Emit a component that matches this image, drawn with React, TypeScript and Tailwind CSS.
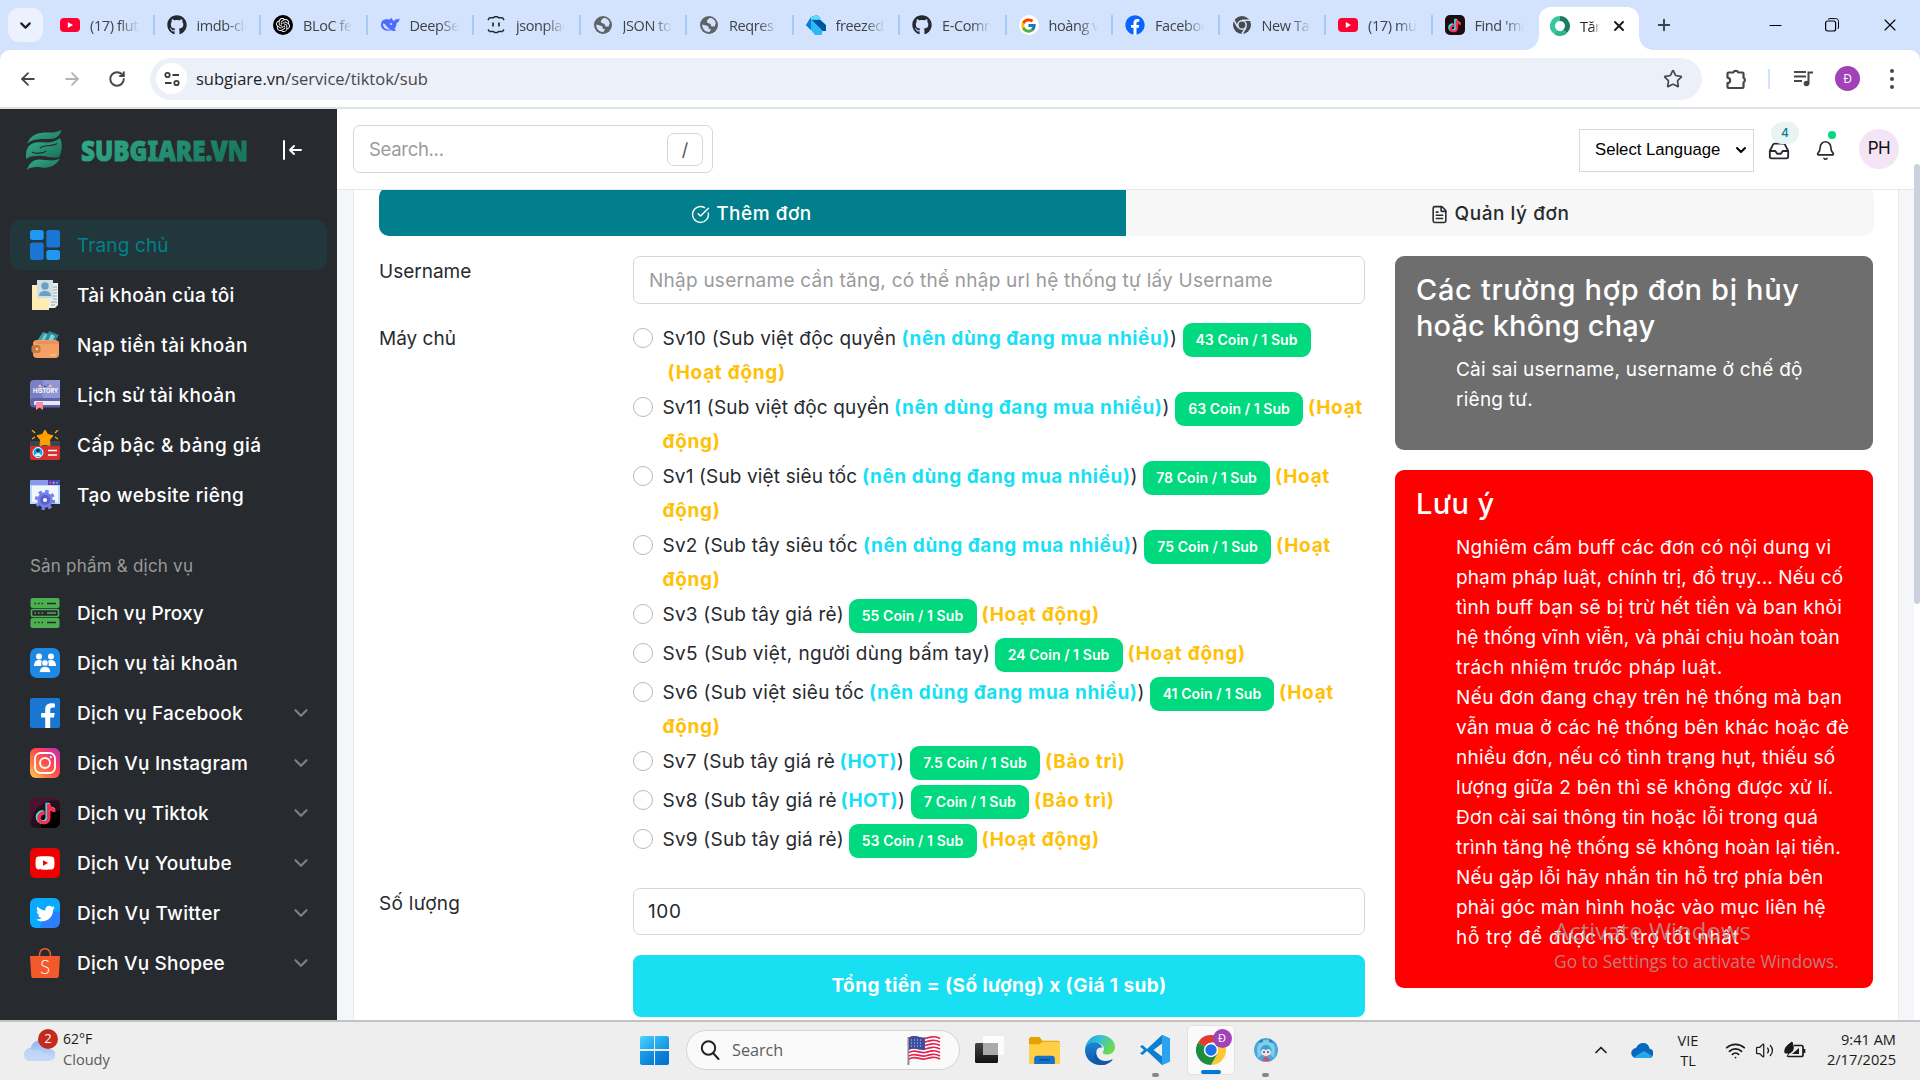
import React from "react";
import type { ReactNode } from "react";
import { FaGithub, FaYoutube, FaFacebook, FaTiktok, FaTwitter, FaFacebookF } from "react-icons/fa";
import { FcGoogle } from "react-icons/fc";
import { SiOpenai } from "react-icons/si";
import { ArrowLeft, ArrowRight, ChevronDown, ChevronUp, RotateCw, Star, X, Plus, Minus, FileText, Bell, Inbox, Wifi, Volume2, CircleCheckBig } from "lucide-react";

/* ---------- Browser tab icons ---------- */

function GlobeIcon() {
  return (
    <svg viewBox="0 0 20 20" className="size-5">
      <circle cx="10" cy="10" r="9" fill="#5f6368" />
      <path d="M10.500 3 8 5.500v2l3.500 1.500 1 2.500h3l1.200-3C16.500 5 13.500 3 10.500 3Z" fill="#d3e3fd" />
      <path d="M3.200 9.500 7 10.500l2.500 1v2l2.500.8-1.500 2.700C6 17 3 13.500 3.200 9.500Z" fill="#d3e3fd" />
    </svg>
  );
}

function DeepSeekIcon() {
  return (
    <svg viewBox="0 0 20 20" className="size-5">
      <path d="M1 8.500C1.500 5 5 3.600 9 4.500c1 .4 1.700-.8 2-2 1.200 1 1.300 2.700 2.600 3.300 2 .4 1.700-2.300 3-1.800 1.200.6 2-.4 3-.6-.1 2.400-1.200 4-3 4.600-.2 3-1 4.600-2.300 6l2 1.600c-2 .8-3.700.3-5.300-.4C5 16.800.4 14 1 8.500Z" fill="#4d6bfe" />
      <path d="M3 8.500c3 0 3.600 4.600 7.600 5.700C7 15.500 2.800 13 3 8.500Z" fill="#d3e3fd" />
      <circle cx="11" cy="9" r="1.100" fill="#d3e3fd" />
    </svg>
  );
}

function JsonIcon() {
  return (
    <svg viewBox="0 0 20 20" className="size-5" fill="none" stroke="#24292f" strokeWidth="1.400">
      <path d="M3.500 2.700h4l1-1h3l1 1h4M3.500 16.500h4l1 1h3l1-1h4" />
      <path d="M3.500 2.700 2 5M16.500 2.700 18 5M3.500 16.500 2 14.500M16.500 16.500 18 14.500" />
      <path d="M7 7.500v4M13 7.500v4" strokeWidth="1.700" />
    </svg>
  );
}

function DartIcon() {
  return (
    <svg viewBox="0 0 20 20" className="size-5">
      <path d="m0 10 5-8 6-2 3 2.500L5 4.500v10.500Z" fill="#0075c9" />
      <path d="M5 4.500h9L20 10v6h-3.500Z" fill="#00569e" />
      <path d="M5 4.500 16.500 16l-1 4H9l-4-5Z" fill="#2cb7f6" />
      <path d="m5 2 6-2 4 3-1 1.500H5Z" fill="#55ddff" />
      <path d="m0 10 5-5.500V15Z" fill="#0d7fd0" />
    </svg>
  );
}

function ChromeGray() {
  return (
    <svg viewBox="0 0 20 20" className="size-5">
      <circle cx="10" cy="10" r="9" fill="#474b50" />
      <circle cx="10" cy="10" r="4.200" fill="none" stroke="#d3e3fd" strokeWidth="1.600" />
      <path d="M10 5.300h8.300M5.900 12.300 1.800 5.200M14 12.300 9.900 19" stroke="#d3e3fd" strokeWidth="1.600" />
    </svg>
  );
}

function TiktokNote({ className }: { className: string }) {
  return (
    <span className={`grid place-items-center ${className}`}>
      <FaTiktok className="col-start-1 row-start-1 size-full -translate-x-[0.6px] -translate-y-[0.4px] text-[#25f4ee]" />
      <FaTiktok className="col-start-1 row-start-1 size-full translate-x-[0.8px] translate-y-[0.6px] text-[#fe2c55]" />
      <FaTiktok className="col-start-1 row-start-1 size-full text-white" />
    </span>
  );
}

const youtube = (
  <span className="flex h-[14px] w-5 items-center justify-center rounded-[4px] bg-[#ff0033]">
    <svg viewBox="0 0 6 6" className="size-[6px]">
      <path d="M.8 0 6 3 .8 6Z" fill="#fff" />
    </svg>
  </span>
);
const github = <FaGithub className="size-5 text-[#24292f]" />;

const tabs: { icon: ReactNode; title: string }[] = [
  { icon: youtube, title: "(17) flutter" },
  { icon: github, title: "imdb-clone" },
  {
    icon: (
      <span className="flex size-5 items-center justify-center rounded-full bg-black">
        <SiOpenai className="size-[14px] text-white" />
      </span>
    ),
    title: "BLoC feature",
  },
  { icon: <DeepSeekIcon />, title: "DeepSeek" },
  { icon: <JsonIcon />, title: "jsonplaceholder" },
  { icon: <GlobeIcon />, title: "JSON to Dart" },
  { icon: <GlobeIcon />, title: "Reqres" },
  { icon: <DartIcon />, title: "freezed" },
  { icon: github, title: "E-Commerce" },
  {
    icon: (
      <span className="flex size-5 items-center justify-center rounded-full bg-white">
        <FcGoogle className="size-[17px]" />
      </span>
    ),
    title: "hoàng văn",
  },
  {
    icon: (
      <span className="flex size-5 items-center justify-center rounded-full bg-white">
        <FaFacebook className="size-5 text-[#0866ff]" />
      </span>
    ),
    title: "Facebook",
  },
  { icon: <ChromeGray />, title: "New Tab" },
  { icon: youtube, title: "(17) music" },
  {
    icon: (
      <span className="flex size-5 items-center justify-center rounded-[5px] bg-[#1b0d12]">
        <TiktokNote className="size-[13px]" />
      </span>
    ),
    title: "Find 'music'",
  },
];

function TabStrip() {
  return (
    <div className="flex h-[50px] shrink-0 items-center bg-[#d3e3fd] pl-2 font-['Open_Sans',sans-serif] text-[14.500px] text-[#3f4247]">
      <div className="flex h-[34px] w-[35px] items-center justify-center rounded-[11px] bg-[#ebf1fd]">
        <ChevronDown className="size-[17px] text-[#1f1f1f]" strokeWidth={3} />
      </div>
      <div className="ml-[5px] flex">
        {tabs.map((tab, i) => (
          <div
            key={i}
            className={`flex h-5 w-[106.500px] items-center border-r-2 pl-3 ${i === 13 ? "border-transparent" : "border-[#a8c7fa]"}`}
          >
            <span className="flex size-5 shrink-0 items-center">{tab.icon}</span>
            <span className="ml-[10px] w-[49px] overflow-hidden pt-[2px] whitespace-nowrap mask-r-from-60% tracking-[-0.400px]">{tab.title}</span>
          </div>
        ))}
      </div>
      <div className="relative mt-[7px] flex h-[43px] w-[100px] items-center rounded-t-[12px] bg-white pb-[6px] pl-[11px]">
        <span className="absolute -left-[14px] bottom-0 size-[14px] bg-[radial-gradient(circle_at_0_0,#d3e3fd_13.500px,#fff_14px)]" />
        <span className="absolute -right-[14px] bottom-0 size-[14px] bg-[radial-gradient(circle_at_100%_0,#d3e3fd_13.500px,#fff_14px)]" />
        <svg viewBox="0 0 20 20" className="size-5 shrink-0" fill="none" strokeWidth="5">
          <path d="M10 2.500a7.500 7.500 0 0 0-4.500 13.500" stroke="#35c79d" />
          <path d="M10 2.500a7.500 7.500 0 0 1 5 13" stroke="#1d7a63" />
          <path d="M5.500 16a7.500 7.500 0 0 0 10-.8" stroke="#2bb68d" />
        </svg>
        <span className="ml-[10px] w-[20px] overflow-hidden pt-[2px] whitespace-nowrap mask-r-from-60% tracking-[-0.500px] text-[#1f1f1f]">Tăng</span>
        <X className="ml-[11px] size-4 shrink-0 text-[#1f1f1f]" strokeWidth={3} />
      </div>
      <Plus className="ml-4 size-[18px] text-[#3f4247]" strokeWidth={2.6} />
      <div className="ml-auto flex items-center pr-[20px] text-black">
        <Minus className="size-[19px]" strokeWidth={1.3} />
        <svg viewBox="0 0 14 14" className="ml-[40px] size-[14px]" fill="none" stroke="currentColor">
          <rect x=".6" y="3" width="10" height="10" rx="2" strokeWidth="1.200" />
          <path d="M3 1.500C3.500.8 4 .6 5 .6h5.500c2 0 3 1 3 3V9c0 1-.3 1.700-1 2" strokeWidth="1" />
        </svg>
        <X className="ml-[41px] size-[20px]" strokeWidth={1.3} />
      </div>
    </div>
  );
}

function Toolbar() {
  return (
    <div className="shrink-0 bg-[#d3e3fd]">
      <div className="flex h-[59px] items-center rounded-t-[10px] border-b-2 border-[#dfe1e3] bg-white pl-[18px] text-[#474747]">
        <ArrowLeft className="size-5" strokeWidth={2.2} />
        <ArrowRight className="ml-6 size-5 text-[#b4b4b4]" strokeWidth={2.2} />
        <RotateCw className="ml-[26px] size-[18px]" strokeWidth={2.6} />
        <div className="ml-[24px] flex h-[42px] w-[1552px] items-center rounded-full bg-[#ecf0f9] pr-[19px] pl-[6px]">
          <span className="flex size-[31px] items-center justify-center rounded-full bg-white">
            <svg viewBox="0 0 16 16" className="size-4" fill="none" stroke="#3c3c3c" strokeWidth="1.800">
              <circle cx="3.500" cy="4" r="2.200" />
              <path d="M8.500 4H15M1 12h6.500" />
              <circle cx="12.500" cy="12" r="2.200" />
            </svg>
          </span>
          <span className="ml-[9px] pt-[2px] font-['Open_Sans',sans-serif] text-[16.500px] text-[#474747]">
            <span className="text-[#1f1f1f]">subgiare.vn</span>/service/tiktok/sub
          </span>
          <Star className="ml-auto size-5" strokeWidth={2} />
        </div>
        <svg viewBox="0 0 24 24" className="ml-[22px] size-6" fill="none" stroke="currentColor" strokeWidth="2.200">
          <path d="M4.500 5.500h4.800a2.600 2.200 0 0 1 5 0h4.200a1 1 0 0 1 1 1v4.200a2.200 2.600 0 0 1 0 4.800V20a1 1 0 0 1-1 1h-14a1 1 0 0 1-1-1v-3.800c3.500-.6 3.500-5 0-5.600V6.500a1 1 0 0 1 1-1Z" strokeLinejoin="round" />
        </svg>
        <span className="ml-[20px] h-5 w-[2px] bg-[#d3e3fd]" />
        <svg viewBox="0 0 22 20" className="ml-[23px] h-5 w-[22px]" fill="none" stroke="currentColor" strokeWidth="2">
          <path d="M1 3h12M1 7.500h12M1 12h8M15.500 14.500V3.500H20" />
          <circle cx="13.500" cy="14.500" r="2.800" fill="currentColor" stroke="none" />
        </svg>
        <span className="ml-[20px] flex size-[25px] items-center justify-center rounded-full bg-[#a142b8] font-['Open_Sans',sans-serif] text-[12px] text-white">Đ</span>
        <span className="ml-[30px] flex flex-col gap-[4px]">
          <i className="size-[4px] rounded-full bg-[#474747]" />
          <i className="size-[4px] rounded-full bg-[#474747]" />
          <i className="size-[4px] rounded-full bg-[#474747]" />
        </span>
      </div>
    </div>
  );
}

/* ---------- Sidebar ---------- */

const box = "size-[30px] shrink-0";

const HomeIcon = (
  <svg viewBox="0 0 30 30" className={box}>
    <rect width="13.700" height="10" rx="2.500" fill="#2196f3" />
    <rect y="12.500" width="13.700" height="17.500" rx="2.500" fill="#1976d2" />
    <rect x="16.300" width="13.700" height="17.500" rx="2.500" fill="#1976d2" />
    <rect x="16.300" y="20" width="13.700" height="10" rx="2.500" fill="#2196f3" />
  </svg>
);
const AccountIcon = (
  <svg viewBox="0 0 30 30" className={box}>
    <path d="M19 3h9v22l-3 3h-8Z" fill="#eceff1" />
    <path d="M23 7h4M23 10h4M23 13h4M23 16h4M23 19h4M21 22h6M21 25h4" stroke="#90a4ae" />
    <path d="M2 5h5v13h12v12H2Z" fill="#ffecb3" />
    <path d="M7 0h16v18H7Z" fill="#cfdfe8" />
    <circle cx="15" cy="6" r="3.700" fill="#6f9fc0" />
    <path d="M9 16c0-4 3-5 6-5s6 1 6 5Z" fill="#6f9fc0" />
  </svg>
);
const WalletIcon = (
  <svg viewBox="0 0 30 30" className={box}>
    <path d="m7 11 6-9 7 2-3 8Z" fill="#3f9aa8" />
    <path d="m15 12 4-11 10 4-5 8Z" fill="#2f8794" />
    <path d="m11 11 4-7 2 1-4 7ZM18 11l3-7 4 2-3 6Z" fill="#7fd0da" />
    <rect x="3" y="10" width="26" height="18" rx="4" fill="#f4a065" />
    <path d="M5 11h23c1 0 1 3 0 3H7Z" fill="#e8925a" />
    <rect x="1.500" y="15" width="9" height="8" rx="2.500" fill="#c97743" />
    <circle cx="7" cy="19" r="1.300" fill="#ffcf8a" />
    <path d="M20 25h6" stroke="#ffd17f" strokeWidth="1.200" />
  </svg>
);
const HistoryIcon = (
  <svg viewBox="0 0 30 30" className={box}>
    <path d="M4 0h26v21H0V4a4 4 0 0 1 4-4Z" fill="#7a7fc4" />
    <path d="M14 0h16v21H16c-6-6-6-14-2-21Z" fill="#9096d3" />
    <path d="M4 20h26v7H4a3.500 3.500 0 0 1 0-7Z" fill="#e8eaf6" />
    <path d="M0 21c0-2 2-3 4-3h26v3H5c-1.500 0-1.500 4 0 4h25v2.500H4c-2.500 0-4-2-4-6.500Z" fill="#5c62ad" />
    <path d="M6 22h7v8l-3.500-2.500L6 30Z" fill="#ff8a9b" />
    <circle cx="10" cy="6" r="1.600" fill="#ffb3c1" />
    <circle cx="20" cy="6" r="1.600" fill="#ffb3c1" />
    <path d="M12 4.500v1M18 4.500v1M14 6q1 1 2 0" stroke="#2b2e63" fill="none" />
    <text x="3" y="13" fontFamily="Inter" fontSize="5.500" fontWeight="700" fill="#fff" textLength="25">HISTORY</text>
  </svg>
);
const RankIcon = (
  <svg viewBox="0 0 30 30" className={box}>
    <rect y="11" width="30" height="19" rx="2" fill="#d32f2f" />
    <path d="M2 11h26a2 2 0 0 1 2 2v3H0v-3a2 2 0 0 1 2-2Z" fill="#37474f" />
    <path d="m15 0 2.700 4.500 5.300 1.200L19.500 10l.4 5.500L15 14.300l-4.900 1.200.4-5.500L7 5.700l5.300-1.200Z" fill="#ffa000" stroke="#ffa000" strokeLinejoin="round" />
    <path d="m2 0 3 3M28 0l-3 3M2 9l3-2M28 9l-3-2" stroke="#ffb300" strokeWidth="1.300" />
    <circle cx="8" cy="22.500" r="5" fill="#03a9f4" stroke="#fff" />
    <circle cx="8" cy="20.500" r="1.800" fill="#263238" />
    <path d="M5 26c0-4 6-4 6 0Z" fill="#e1f5fe" />
    <path d="M18 20.500h9M18 25h9" stroke="#fff" strokeWidth="1.500" />
  </svg>
);
const WebsiteIcon = (
  <svg viewBox="0 0 30 30" className={box}>
    <path d="M0 2a2 2 0 0 1 2-2h26a2 2 0 0 1 2 2v22H0Z" fill="#b5dcff" />
    <path d="M2 6h26v16H2Z" fill="#f3f8ff" />
    <path d="M0 2a2 2 0 0 1 2-2h16v5H0Z" fill="#8b97e8" />
    <path d="M18 0h10a2 2 0 0 1 2 2v3H18Z" fill="#4a3fc0" />
    <circle cx="20.500" cy="2.700" r="1" fill="#ff5252" />
    <circle cx="23.700" cy="2.700" r="1" fill="#ffca28" />
    <circle cx="27" cy="2.700" r="1" fill="#4dd07f" />
    <g transform="translate(15 20)">
      <circle r="8.700" fill="none" stroke="#7684e6" strokeWidth="3" strokeDasharray="3.400 3.430" />
      <circle r="7.700" fill="#7380e4" />
      <circle r="5" fill="#5a5fd6" />
      <circle r="2" fill="#fff" />
    </g>
  </svg>
);
const ProxyIcon = (
  <svg viewBox="0 0 30 30" className={box}>
    <rect x=".5" width="29" height="10" rx="2" fill="#4caf50" />
    <rect x=".5" y="20" width="29" height="10" rx="2" fill="#4caf50" />
    <rect x="1.500" y="11.500" width="27" height="7" rx="1.500" fill="#272a2f" stroke="#4caf50" strokeWidth="1.600" />
    <path d="M17 5.500h9M17 24.500h9" stroke="#272a2f" strokeWidth="1.500" />
    <path d="M4.500 5.500h1.500m2 0h1.500m2 0h1.500M4.500 24.500h1.500m2 0h1.500m2 0h1.500" stroke="#272a2f" strokeWidth="1.500" />
    <path d="M17 15h9M4.500 15h1.500m2 0h1.500m2 0h1.500" stroke="#4caf50" strokeWidth="1.500" />
  </svg>
);
const PeopleIcon = (
  <svg viewBox="0 0 30 30" className={box}>
    <rect width="30" height="30" rx="7" fill="#1e88e5" />
    <g fill="#fff">
      <circle cx="9" cy="8.500" r="3" />
      <path d="M4 18c0-4 2-6 5-6s3.500 1 3 3l-1 3Z" />
      <circle cx="21" cy="8.500" r="3" />
      <path d="M26 18c0-4-2-6-5-6s-3.500 1-3 3l1 3Z" />
      <g stroke="#1e88e5" strokeWidth=".8">
        <circle cx="15" cy="15" r="3.300" />
        <path d="M9.500 24.500c0-4 2-6 5.500-6s5.500 2 5.500 6Z" />
      </g>
    </g>
  </svg>
);
const FacebookIcon = (
  <span className="flex size-[30px] shrink-0 items-end justify-end overflow-hidden rounded-[2px] bg-[#1976d2] pr-[4px]">
    <FaFacebookF className="h-[26px] w-[16px] translate-y-[1px] text-white" />
  </span>
);
const InstagramIcon = (
  <span className="flex size-[30px] shrink-0 items-center justify-center rounded-[6px] bg-[linear-gradient(45deg,#ffd54f_0%,#ff7a45_28%,#ff4b4b_55%,#e0338a_80%,#a736c8_100%)]">
    <svg viewBox="0 0 24 24" className="size-6" fill="none" stroke="#fff" strokeWidth="1.800">
      <rect x="2" y="2" width="20" height="20" rx="5.500" />
      <circle cx="12" cy="12" r="5" />
      <circle cx="17.800" cy="6.200" r=".7" fill="#fff" strokeWidth="1" />
    </svg>
  </span>
);
const TiktokIcon = (
  <span className="flex size-[30px] shrink-0 items-center justify-center rounded-[6px] bg-[radial-gradient(circle_at_85%_90%,#000_0_38%,#23101a_40%_65%,#4a1130_68%)]">
    <TiktokNote className="size-[21px]" />
  </span>
);
const YoutubeIcon = (
  <span className="flex size-[30px] shrink-0 items-center justify-center rounded-[5px] bg-[#ee0000]">
    <FaYoutube className="size-[20px] text-white" />
  </span>
);
const TwitterIcon = (
  <span className="flex size-[30px] shrink-0 items-center justify-center rounded-[6px] bg-[radial-gradient(circle_at_90%_100%,#2b7fff_0_40%,#08a9ff_42%)]">
    <FaTwitter className="size-[19px] text-white" />
  </span>
);
const ShopeeIcon = (
  <svg viewBox="0 0 30 30" className={box}>
    <path d="M0 8h30l-1.200 20a2 2 0 0 1-2 2H3.200a2 2 0 0 1-2-2Z" fill="#f4592b" />
    <path d="M9.500 8C9.500 3 11.500.7 15 .7S20.500 3 20.500 8" fill="none" stroke="#f4592b" strokeWidth="1.400" />
    <text x="15" y="25.500" textAnchor="middle" fontFamily="Lato" fontSize="19" fontWeight="300" fill="#fff">S</text>
  </svg>
);

interface NavItem {
  icon: ReactNode;
  label: string;
  spacing: string;
  expandable?: boolean;
}

const mainNav: NavItem[] = [
  { icon: AccountIcon, label: "Tài khoản của tôi", spacing: "tracking-[0.240px]" },
  { icon: WalletIcon, label: "Nạp tiền tài khoản", spacing: "tracking-[0.380px]" },
  { icon: HistoryIcon, label: "Lịch sử tài khoản", spacing: "tracking-[0.340px]" },
  { icon: RankIcon, label: "Cấp bậc & bảng giá", spacing: "tracking-[0.460px]" },
  { icon: WebsiteIcon, label: "Tạo website riêng", spacing: "tracking-[0.370px]" },
];
const serviceNav: NavItem[] = [
  { icon: ProxyIcon, label: "Dịch vụ Proxy", spacing: "tracking-[0.130px]" },
  { icon: PeopleIcon, label: "Dịch vụ tài khoản", spacing: "tracking-[0.260px]" },
  { icon: FacebookIcon, label: "Dịch vụ Facebook", spacing: "tracking-[0.210px]", expandable: true },
  { icon: InstagramIcon, label: "Dịch Vụ Instagram", spacing: "tracking-[0.250px]", expandable: true },
  { icon: TiktokIcon, label: "Dịch vụ Tiktok", spacing: "tracking-[0.160px]", expandable: true },
  { icon: YoutubeIcon, label: "Dịch Vụ Youtube", spacing: "tracking-[0.250px]", expandable: true },
  { icon: TwitterIcon, label: "Dịch Vụ Twitter", spacing: "tracking-[0.330px]", expandable: true },
  { icon: ShopeeIcon, label: "Dịch Vụ Shopee", spacing: "tracking-[0.200px]", expandable: true },
];

function NavRow({ item }: { item: NavItem }) {
  return (
    <a className="flex h-[50px] items-center px-5 font-medium text-white">
      {item.icon}
      <span className={`ml-[17px] pt-[2px] whitespace-nowrap ${item.spacing}`}>{item.label}</span>
      {item.expandable && <ChevronDown className="-mr-[5px] ml-auto size-[22px] text-[#7c7f83]" strokeWidth={2.4} />}
    </a>
  );
}

function Sidebar() {
  return (
    <aside className="w-[337px] shrink-0 bg-[#272a2f] px-[10px] text-[19px]">
      <div className="flex h-[81px] items-center pl-4">
        <svg viewBox="0 0 36 40" className="h-10 w-9">
          <defs>
            <linearGradient id="leaf" x1="0" y1="0" x2="1" y2="1">
              <stop offset="0" stopColor="#37b28c" />
              <stop offset="1" stopColor="#17705a" />
            </linearGradient>
          </defs>
          <g fill="url(#leaf)">
            <path d="M1 14C4 5 12 2 21 2.500 27 2.800 31 2 35.500 0 34 6 30 9 24 9 16 9 7 8 1 14Z" />
            <path d="M0 29C-.5 21 1 14 10 12.500 17 11.500 25 15 34 8 37 14 36 22 33 27 26 29 17 25 11 26 6 26 2 27 0 29Z" />
            <path d="M1 40C2 34 8 29 14 29.500 21 30 29 32 34 28 31 35 24 38.500 16 37.500 10 36.500 5 37 1 40Z" />
          </g>
          <path d="M6 22C11 25 20 22 20 20.500M31 13.500C27 17 17 14.500 14 18" fill="none" stroke="#272a2f" strokeWidth="1.200" />
        </svg>
        <svg viewBox="0 0 170 30" className="ml-[18px] h-[30px] w-[170px]">
          <defs>
            <linearGradient id="word" x1="0" y1="0" x2="1" y2="0.300">
              <stop offset="0" stopColor="#34b08c" />
              <stop offset="1" stopColor="#187a5f" />
            </linearGradient>
          </defs>
          <text x="1" y="25.500" fontFamily="Noto Sans, Open Sans, sans-serif" fontSize="28.500" fontWeight="900" fill="url(#word)" stroke="url(#word)" strokeWidth=".9" textLength="167" lengthAdjust="spacingAndGlyphs">
            SUBGIARE.VN
          </text>
        </svg>
        <svg viewBox="0 0 20 20" className="ml-[32px] size-5" fill="none" stroke="#fff" strokeWidth="2" strokeLinecap="round" strokeLinejoin="round">
          <path d="M2 1v18M19 10H8M12 6l-4 4 4 4" />
        </svg>
      </div>
      <nav className="mt-[30px]">
        <a className="flex h-[50px] items-center rounded-[10px] bg-[#21373b] px-5 text-[#02808c]">
          {HomeIcon}
          <span className="ml-[17px] pt-[2px] tracking-[0.120px]">Trang chủ</span>
        </a>
        {mainNav.map((n) => (
          <NavRow key={n.label} item={n} />
        ))}
        <p className="flex h-[68px] items-end pb-[10px] pl-5 text-[17px] leading-[24px] tracking-[0.210px] text-[#9a9a9a]">Sản phẩm &amp; dịch vụ</p>
        {serviceNav.map((n) => (
          <NavRow key={n.label} item={n} />
        ))}
      </nav>
    </aside>
  );
}

/* ---------- Page content ---------- */

function PageHeader() {
  return (
    <header className="relative z-10 flex h-[81px] shrink-0 items-center border-b border-[#e6e8ea] bg-white pr-[15px] pl-4">
      <div className="flex h-[48px] w-[360px] items-center rounded-[7px] border border-[#d6d6d6] pr-[9px] pl-[15px]">
        <span className="pt-px text-[18.500px] tracking-[-0.300px] text-[#9b9b9b]">Search...</span>
        <kbd className="ml-auto flex h-[33px] w-[36px] items-center justify-center rounded-[7px] border border-[#d6d6d6] font-[Inter,sans-serif] text-[18px] text-[#555]">/</kbd>
      </div>
      <div className="mt-[2px] ml-auto flex h-[43px] w-[175px] items-center border border-[#d9d9d9] pr-1 pl-[15px] font-['Liberation_Sans',sans-serif] text-[16.700px] text-black">
        Select Language
        <ChevronDown className="ml-auto size-4" strokeWidth={3} />
      </div>
      <div className="relative ml-[14px]">
        <Inbox className="mt-[4px] size-[22px] text-[#272a2f]" strokeWidth={2} />
        <span className="absolute -top-[14px] left-[3px] flex h-[22px] w-[28px] items-center justify-center rounded-full bg-[#e8f4f4] text-[12px] font-medium text-[#02808c]">4</span>
      </div>
      <div className="relative ml-[25px]">
        <Bell className="mt-[3px] size-[21px] text-[#272a2f]" strokeWidth={1.9} />
        <span className="absolute -top-[6px] left-[13px] size-2 rounded-full bg-[#00d97e]" />
      </div>
      <span className="ml-[23px] flex size-10 items-center justify-center rounded-full bg-[#f3e5f5] text-[17px] tracking-[-0.600px] text-[#111]">PH</span>
    </header>
  );
}

interface Server {
  name: string;
  nameWidth: string;
  highlight?: "long" | "hot";
  price: string;
  badge: string;
  status: string;
  wrap?: "all" | "last";
}

const servers: Server[] = [
  { name: "Sv10 (Sub việt độc quyền", nameWidth: "w-[239px] tracking-[0.240px]", highlight: "long", price: "43 Coin / 1 Sub", badge: "w-[128px]", status: "(Hoạt động)", wrap: "all" },
  { name: "Sv11 (Sub việt độc quyền", nameWidth: "w-[231.500px] tracking-[0.140px]", highlight: "long", price: "63 Coin / 1 Sub", badge: "w-[128px]", status: "(Hoạt động)", wrap: "last" },
  { name: "Sv1 (Sub việt siêu tốc", nameWidth: "w-[199.500px] tracking-[0.140px]", highlight: "long", price: "78 Coin / 1 Sub", badge: "w-[127px]", status: "(Hoạt động)", wrap: "last" },
  { name: "Sv2 (Sub tây siêu tốc", nameWidth: "w-[200.500px] tracking-[0.240px]", highlight: "long", price: "75 Coin / 1 Sub", badge: "w-[127px]", status: "(Hoạt động)", wrap: "last" },
  { name: "Sv3 (Sub tây giá rẻ)", nameWidth: "w-[186px] tracking-[0.220px]", price: "55 Coin / 1 Sub", badge: "w-[128px]", status: "(Hoạt động)" },
  { name: "Sv5 (Sub việt, người dùng bấm tay)", nameWidth: "w-[332px] tracking-[0.360px]", price: "24 Coin / 1 Sub", badge: "w-[128px]", status: "(Hoạt động)" },
  { name: "Sv6 (Sub việt siêu tốc", nameWidth: "w-[206.500px] tracking-[0.280px]", highlight: "long", price: "41 Coin / 1 Sub", badge: "w-[124px]", status: "(Hoạt động)", wrap: "last" },
  { name: "Sv7 (Sub tây giá rẻ", nameWidth: "w-[177px] tracking-[0.180px]", highlight: "hot", price: "7.5 Coin / 1 Sub", badge: "w-[130px]", status: "(Bảo trì)" },
  { name: "Sv8 (Sub tây giá rẻ", nameWidth: "w-[178px] tracking-[0.220px]", highlight: "hot", price: "7 Coin / 1 Sub", badge: "w-[118px]", status: "(Bảo trì)" },
  { name: "Sv9 (Sub tây giá rẻ)", nameWidth: "w-[186px] tracking-[0.220px]", price: "53 Coin / 1 Sub", badge: "w-[128px]", status: "(Hoạt động)" },
];

function ServerRow({ s }: { s: Server }) {
  const [first, second] = s.status.split(" ");
  const firstLine = s.wrap === "all" ? "" : s.wrap === "last" ? first : s.status;
  return (
    <div className={`flex ${s.wrap ? "h-[69px]" : "h-[39px]"}`}>
      <span className="mt-[8px] size-[20px] shrink-0 rounded-full border border-[#b9b9b9] bg-white" />
      <div className="ml-[9.500px] whitespace-nowrap">
        <div className="flex h-[36px] items-center pt-[2px]">
          <span className={`shrink-0 ${s.nameWidth}`}>{s.name}</span>
          {s.highlight === "long" && (
            <span className="flex w-[281px]">
              <b className="font-bold tracking-[0.570px] text-[#19dff2]">(nên dùng đang mua nhiều)</b>)
            </span>
          )}
          {s.highlight === "hot" && (
            <span className="flex w-[70.500px]">
              <b className="font-bold tracking-[0.400px] text-[#19dff2]">(HOT)</b>)
            </span>
          )}
          <span className={`mt-[2px] flex h-[34px] items-center justify-center rounded-[9px] bg-[#00d97e] pb-px text-[14px] font-semibold tracking-[0.070px] text-white ${s.badge}`}>
            {s.price}
          </span>
          <b className="ml-[5px] font-bold tracking-[0.700px] text-[#ffc107]">{firstLine}</b>
        </div>
        {s.wrap && (
          <div className={`flex h-8 items-center pt-[2px] font-bold tracking-[0.700px] text-[#ffc107] ${s.wrap === "all" ? "pl-[5px]" : ""}`}>
            {s.wrap === "all" ? s.status : second}
          </div>
        )}
      </div>
    </div>
  );
}

const warnings: [string, string][] = [
  ["Nghiêm cấm buff các đơn có nội dung vi", "tracking-[0.300px]"],
  ["phạm pháp luật, chính trị, đồ trụy... Nếu cố", "tracking-[0.120px]"],
  ["tình buff bạn sẽ bị trừ hết tiền và ban khỏi", "tracking-[0.290px]"],
  ["hệ thống vĩnh viễn, và phải chịu hoàn toàn", "tracking-[0.100px]"],
  ["trách nhiệm trước pháp luật.", "tracking-[0.510px]"],
  ["Nếu đơn đang chạy trên hệ thống mà bạn", "tracking-[0.370px]"],
  ["vẫn mua ở các hệ thống bên khác hoặc đè", "tracking-[0.310px]"],
  ["nhiều đơn, nếu có tình trạng hụt, thiếu số", "tracking-[0.280px]"],
  ["lượng giữa 2 bên thì sẽ không được xử lí.", "tracking-[0.350px]"],
  ["Đơn cài sai thông tin hoặc lỗi trong quá", "tracking-[0.300px]"],
  ["trình tăng hệ thống sẽ không hoàn lại tiền.", "tracking-[0.170px]"],
  ["Nếu gặp lỗi hãy nhắn tin hỗ trợ phía bên", "tracking-[0.260px]"],
  ["phải góc màn hình hoặc vào mục liên hệ", "tracking-[0.230px]"],
  ["hỗ trợ để được hỗ trợ tốt nhất", "tracking-[0.720px]"],
];

function Content() {
  return (
    <div className="relative flex flex-1 overflow-hidden bg-[#f5f6fa] px-4">
      <div className="-mt-[3px] h-[930px] w-[1546px] shrink-0 border-x border-[#e8eaee] bg-white pr-6 pl-[25px]">
        <div className="flex h-[49px] overflow-hidden rounded-[10px] bg-[#f7f7f7] font-medium">
          <div className="flex w-[747px] items-center justify-center bg-[#027f8c] pt-[5px] pr-[2px] text-white">
            <CircleCheckBig className="mr-[6px] size-[19px]" strokeWidth={1.8} />
            <span className="tracking-[0.500px]">Thêm đơn</span>
          </div>
          <div className="flex flex-1 items-center justify-center pt-[5px] pr-px">
            <FileText className="mr-[6px] size-[19px]" strokeWidth={2} />
            <span className="tracking-[0.550px]">Quản lý đơn</span>
          </div>
        </div>
        <div className="mt-5 flex">
          <div className="w-[986px]">
            <div className="flex">
              <span className="w-[254px] pt-px leading-[30px]">Username</span>
              <div className="flex h-[48px] w-[732px] items-center rounded-[7px] border border-[#d6d6d6] pt-[2px] pl-[15px] whitespace-nowrap tracking-[0.240px] text-[#9b9b9b]">
                Nhập username cần tăng, có thể nhập url hệ thống tự lấy Username
              </div>
            </div>
            <div className="mt-4 flex">
              <span className="w-[254px] pt-px leading-[36px]">Máy chủ</span>
              <div className="w-[732px]">
                {servers.map((s) => (
                  <ServerRow key={s.name} s={s} />
                ))}
              </div>
            </div>
            <div className="mt-[28px] flex">
              <span className="w-[254px] pt-px leading-[30px] tracking-[0.300px]">Số lượng</span>
              <div className="w-[732px]">
                <div className="flex h-[47px] items-center rounded-[7px] border border-[#d6d6d6] pt-[2px] pl-[14px] tracking-[0.600px]">100</div>
                <div className="mt-5 flex h-[62px] items-center justify-center rounded-[8px] bg-[#19dff2] pt-px font-bold tracking-[0.430px] text-white">
                  Tổng tiền = (Số lượng) x (Giá 1 sub)
                </div>
              </div>
            </div>
          </div>
          <div className="ml-[30px] w-[478px] text-white">
            <section className="h-[194px] rounded-[9px] bg-[#6e6e6e] px-[21px] pt-4">
              <h3 className="text-[29px] leading-[36px] font-medium whitespace-nowrap">
                <span className="block tracking-[0.680px]">Các trường hợp đơn bị hủy</span>
                <span className="block tracking-[0.120px]">hoặc không chạy</span>
              </h3>
              <p className="mt-[11px] pl-[40px] leading-[30px] whitespace-nowrap">
                <span className="block tracking-[0.240px]">Cài sai username, username ở chế độ</span>
                <span className="block tracking-[0.250px]">riêng tư.</span>
              </p>
            </section>
            <section className="mt-5 h-[518px] rounded-[9px] bg-[#ff0000] px-[21px] pt-4">
              <h3 className="text-[29px] leading-[36px] font-medium tracking-[0.400px]">Lưu ý</h3>
              <p className="mt-[11px] pl-[40px] leading-[30px] whitespace-nowrap">
                {warnings.map(([line, spacing]) => (
                  <span key={line} className={`block ${spacing}`}>
                    {line}
                  </span>
                ))}
              </p>
            </section>
          </div>
        </div>
      </div>
    </div>
  );
}

/* ---------- Taskbar ---------- */

function Taskbar() {
  return (
    <footer className="flex h-[60px] shrink-0 items-center border-t-2 border-[#c2c2c2] bg-[#eeeeee] pb-[2px] pl-6 font-['Open_Sans',sans-serif] text-[14.600px] text-[#1b1b1b]">
      <div className="relative h-[30px] w-[31px]">
        <svg viewBox="0 0 31 22" className="mt-[5px] h-[22px] w-[31px]">
          <defs>
            <linearGradient id="cloud" x1="0" y1="0" x2="0" y2="1">
              <stop offset="0" stopColor="#8db4ee" />
              <stop offset="1" stopColor="#cfe0f8" />
            </linearGradient>
          </defs>
          <path d="M7 21a6.500 6.500 0 0 1-.5-13C8 3 12 0 16.500 0 22 0 26 4 26 9a6 6 0 0 1-1 12Z" fill="url(#cloud)" />
          <path d="M6 21a6 6 0 1 1 4-10c5-3 9 0 9 4 4-2 8 0 8 3s-2 3-3 3Z" fill="#c3d7f6" opacity=".8" />
        </svg>
        <span className="absolute -top-[6px] left-[14px] flex size-5 items-center justify-center rounded-full bg-[#c42b1c] text-[13px] text-white">2</span>
      </div>
      <div className="ml-[8px] w-[577px] pb-[3px] leading-[20px]">
        <p className="text-[14px]">62°F</p>
        <p className="text-[#5a5a5a]">Cloudy</p>
      </div>
      <div className="grid size-[29px] grid-cols-2 gap-[1.500px]">
        <i className="rounded-tl-[2px] bg-[linear-gradient(135deg,#4fd0ff,#1ba3ea)]" />
        <i className="rounded-tr-[2px] bg-[linear-gradient(135deg,#35bdf5,#1190e0)]" />
        <i className="rounded-bl-[2px] bg-[linear-gradient(135deg,#1ca2ea,#0a78d4)]" />
        <i className="rounded-br-[2px] bg-[linear-gradient(135deg,#0f8be0,#006fce)]" />
      </div>
      <div className="ml-[17px] flex h-10 w-[274px] items-center rounded-full border border-[#d5d5d5] bg-[#fafafa] pl-[13px] text-[16.200px] text-[#5c5c5c]">
        <svg viewBox="0 0 20 20" className="size-5" fill="none" stroke="#222" strokeWidth="2">
          <circle cx="8.500" cy="8" r="6.700" />
          <path d="m13 13 5.500 6" strokeLinecap="round" />
        </svg>
        <span className="ml-[12px]">Search</span>
        <svg viewBox="0 0 34 30" className="ml-[124px] h-[30px] w-[34px]">
          <path d="M1.500 2v28" stroke="#8a8f98" strokeWidth="2" />
          <path d="M2 3c6-4 11 1 16 0 5-1.500 10-3 15 0v21c-5-3-10-1-15 0-5 1-10-3-16 0Z" fill="#fff" />
          <g fill="none" stroke="#e0244f" strokeWidth="1.700">
            <path d="M2 3.500c6-4 11 1 16 0 5-1.500 10-3 15 0M2 7c6-4 11 1 16 0 5-1.500 10-3 15 0M2 10.500c6-4 11 1 16 0 5-1.500 10-3 15 0M2 14c6-4 11 1 16 0 5-1.500 10-3 15 0M2 17.500c6-4 11 1 16 0 5-1.500 10-3 15 0M2 21c6-4 11 1 16 0 5-1.500 10-3 15 0M2 24c6-4 11 1 16 0 5-1.500 10-3 15 0" />
          </g>
          <path d="M2 2.500c6-4 11 1 16 0V15c-5 1-10-3-16 0Z" fill="#3c4f9f" />
          <path d="M4 5h12M4 8h12M4 11h12" stroke="#c8d0f0" strokeWidth="1" strokeDasharray="1 2" />
        </svg>
      </div>
      <div className="ml-[2px] flex">
        <div className="flex w-[55px] items-center justify-center">
          <svg viewBox="0 0 30 28" className="h-7 w-[30px]">
            <defs>
              <linearGradient id="tv" x1="0" y1="0" x2="0" y2="1">
                <stop offset="0" stopColor="#444" />
                <stop offset="1" stopColor="#111" />
              </linearGradient>
            </defs>
            <rect y="7" width="23" height="20" rx="1.500" fill="url(#tv)" />
            <rect x="8" width="21" height="19" rx="1.500" fill="#fff" opacity=".82" />
            <rect x="8" y="7" width="15" height="12" fill="#aaa" />
          </svg>
        </div>
        <div className="flex w-[55px] items-center justify-center">
          <svg viewBox="0 0 30 26" className="h-[27px] w-[31px]">
            <path d="M0 2a2 2 0 0 1 2-2h8l3 3.500h15a2 2 0 0 1 2 2V24a2 2 0 0 1-2 2H2a2 2 0 0 1-2-2Z" fill="#e5a100" />
            <path d="M0 7h10l3-2.500h15a2 2 0 0 1 2 2V24a2 2 0 0 1-2 2H2a2 2 0 0 1-2-2Z" fill="#ffcf48" />
            <path d="M5 21a3 3 0 0 1 3-3h14a3 3 0 0 1 3 3v5H5Z" fill="#1673c8" />
            <path d="M10 22h10" stroke="#0c4f95" strokeWidth="1.500" />
          </svg>
        </div>
        <div className="flex w-[55px] items-center justify-center">
          <svg viewBox="0 0 30 30" className="size-[30px]">
            <defs>
              <linearGradient id="edgeTop" x1="0" y1="0" x2="1" y2="0.400">
                <stop offset="0" stopColor="#1f9be0" />
                <stop offset=".5" stopColor="#35c1d4" />
                <stop offset="1" stopColor="#6bdc4e" />
              </linearGradient>
              <linearGradient id="edgeLow" x1="0" y1="0" x2="0" y2="1">
                <stop offset="0" stopColor="#1b86d8" />
                <stop offset="1" stopColor="#0c55a5" />
              </linearGradient>
            </defs>
            <path d="M0 14C1 6 7 0 15 0c9 0 15 6 15 12 0 5-4 7.500-8 7.500-3 0-5-1-4-2.500 3-5-1-9-7-9C6 8 1 10 0 14Z" fill="url(#edgeTop)" />
            <path d="M0 15c0-5 5-8 10-7.500 4 .4 7 2.500 7.500 5.500-2-1-5-.5-6 3-1.200 5 3 10 9 10 3 0 5-1 7-2-3 4-7 6-12 6C6 30 0 23 0 15Z" fill="url(#edgeLow)" />
            <path d="M11 17c-.6 6 4 10 10 9.600 3 0 5-1.200 7-2.600-3 5-9 6.500-13 5.800C9 28 8 21 11 17Z" fill="#1257a8" />
          </svg>
        </div>
        <div className="relative flex w-[56px] items-center justify-center">
          <svg viewBox="0 0 30 30" className="size-[30px]">
            <path d="M22 0 30 3.500v23L22 30 7 16l-4.500 4L0 18.500 4 15 0 11.500 2.500 10 7 14Z" fill="#0b7fd0" />
            <path d="M22 0v30l8-3.500v-23Z" fill="#2aa3f0" />
            <path d="M22 8.500 13.500 15 22 21.500Z" fill="#eee" />
          </svg>
          <i className="absolute -bottom-[12px] h-[4px] w-[7px] rounded-full bg-[#868686]" />
        </div>
        <div className="relative mx-[3.500px] -my-[10px] flex h-[50px] w-[48px] items-center justify-center self-center rounded-[5px] border border-[#e3e3e3] bg-[#fafafa]">
          <svg viewBox="0 0 30 30" className="size-[30px]">
            <path d="M15 15 2 7.500A15 15 0 0 1 28 7.500H15Z" fill="#e33b2e" />
            <path d="M15 15 28 7.500A15 15 0 0 1 15 30l6.500-11Z" fill="#fcc934" />
            <path d="M15 15 21.500 18.700 15 30A15 15 0 0 1 2 7.500Z" fill="#1e8e3e" />
            <circle cx="15" cy="15" r="7.200" fill="#fff" />
            <circle cx="15" cy="15" r="5.700" fill="#1a73e8" />
          </svg>
          <span className="absolute top-[3px] left-[25px] flex size-[19px] items-center justify-center rounded-full bg-[#a142b8] text-[11px] text-white">Đ</span>
          <i className="absolute bottom-0 h-[4px] w-5 rounded-full bg-[#0078d4]" />
        </div>
        <div className="relative flex w-[55px] items-center justify-center">
          <svg viewBox="0 0 24 24" className="size-6">
            <circle cx="12" cy="12" r="12" fill="#4aa9d8" />
            <path d="M3 12C3 5 8 2 12 2s9 3 9 10l-1 8-3-3H7l-3 3Z" fill="#7fcfea" />
            <path d="M4 5 8 1l1 3ZM20 5l-4-4-1 3Z" fill="#2574b8" />
            <ellipse cx="12" cy="14" rx="4.500" ry="4" fill="#fbe3dc" />
            <path d="M6 13c1-5 4-6 6-6s5 1 6 6l-3-2-3 1-3-1Z" fill="#3aa3d4" />
            <circle cx="10" cy="14" r="1" fill="#2b4c9b" />
            <circle cx="14" cy="14" r="1" fill="#2b4c9b" />
            <path d="M8.500 23c0-3 2-4 3.500-4s3.500 1 3.500 4Z" fill="#e6495c" />
          </svg>
          <i className="absolute -bottom-[12px] h-[4px] w-[7px] rounded-full bg-[#868686]" />
        </div>
      </div>
      <div className="ml-auto flex items-center pr-6">
        <ChevronUp className="size-[20px]" strokeWidth={2} />
        <svg viewBox="0 0 22 15" className="ml-[20px] h-[15px] w-[22px]">
          <path d="M5.500 15a5 5 0 0 1-.500-10C6 2 9 0 12 0c3.500 0 6 2 6.500 5.500a4.800 4.800 0 0 1-1 9.500Z" fill="#0a67c0" />
          <path d="m3 14 10-6 8 5c-1 1.500-2 2-3.500 2h-12C4.500 15 3.500 14.700 3 14Z" fill="#28a8ea" />
        </svg>
        <div className="ml-[24px] w-[22px] text-center leading-[20px]">
          <p>VIE</p>
          <p>TL</p>
        </div>
        <Wifi className="ml-[26px] size-[21px]" strokeWidth={2} />
        <Volume2 className="ml-[9px] size-[19px]" strokeWidth={1.6} />
        <svg viewBox="0 0 22 18" className="ml-[10px] h-[18px] w-[22px]" fill="none" stroke="#1b1b1b" strokeWidth="1.700">
          <path d="M10 4.500h7.500a1.500 1.500 0 0 1 1.500 1.500v8a1.500 1.500 0 0 1-1.500 1.500H4M20.500 8v4" />
          <path d="M1 12C0 6 4 4 8 1c2 5 2 9-2 11ZM3 16l4-9" fill="#1b1b1b" strokeWidth="1" />
          <path d="M15 7v6H8Z" fill="#1b1b1b" stroke="none" />
        </svg>
        <div className="ml-[18px] w-[72px] pb-[2px] text-right leading-[20px] whitespace-nowrap">
          <p>9:41 AM</p>
          <p>2/17/2025</p>
        </div>
      </div>
    </footer>
  );
}

export default function App() {
  return (
    <div className="relative flex h-[1080px] w-[1920px] flex-col overflow-hidden bg-white">
      <TabStrip />
      <Toolbar />
      <main className="flex h-[911px] shrink-0 font-[Inter,sans-serif] text-[19px] text-[#272a2f]">
        <Sidebar />
        <div className="flex w-[1577px] flex-col">
          <PageHeader />
          <Content />
        </div>
        <div className="w-[6px] bg-white pt-[55px]">
          <div className="h-[440px] rounded-[3px] bg-[#cbd2dd]" />
        </div>
      </main>
      <Taskbar />
      <div className="pointer-events-none absolute top-[914px] left-[1554px] font-['Open_Sans',sans-serif] whitespace-nowrap text-[#a9a9a9]/75">
        <p className="text-[24px] leading-[34px]">Activate Windows</p>
        <p className="text-[17.400px] leading-[26px]">Go to Settings to activate Windows.</p>
      </div>
    </div>
  );
}
